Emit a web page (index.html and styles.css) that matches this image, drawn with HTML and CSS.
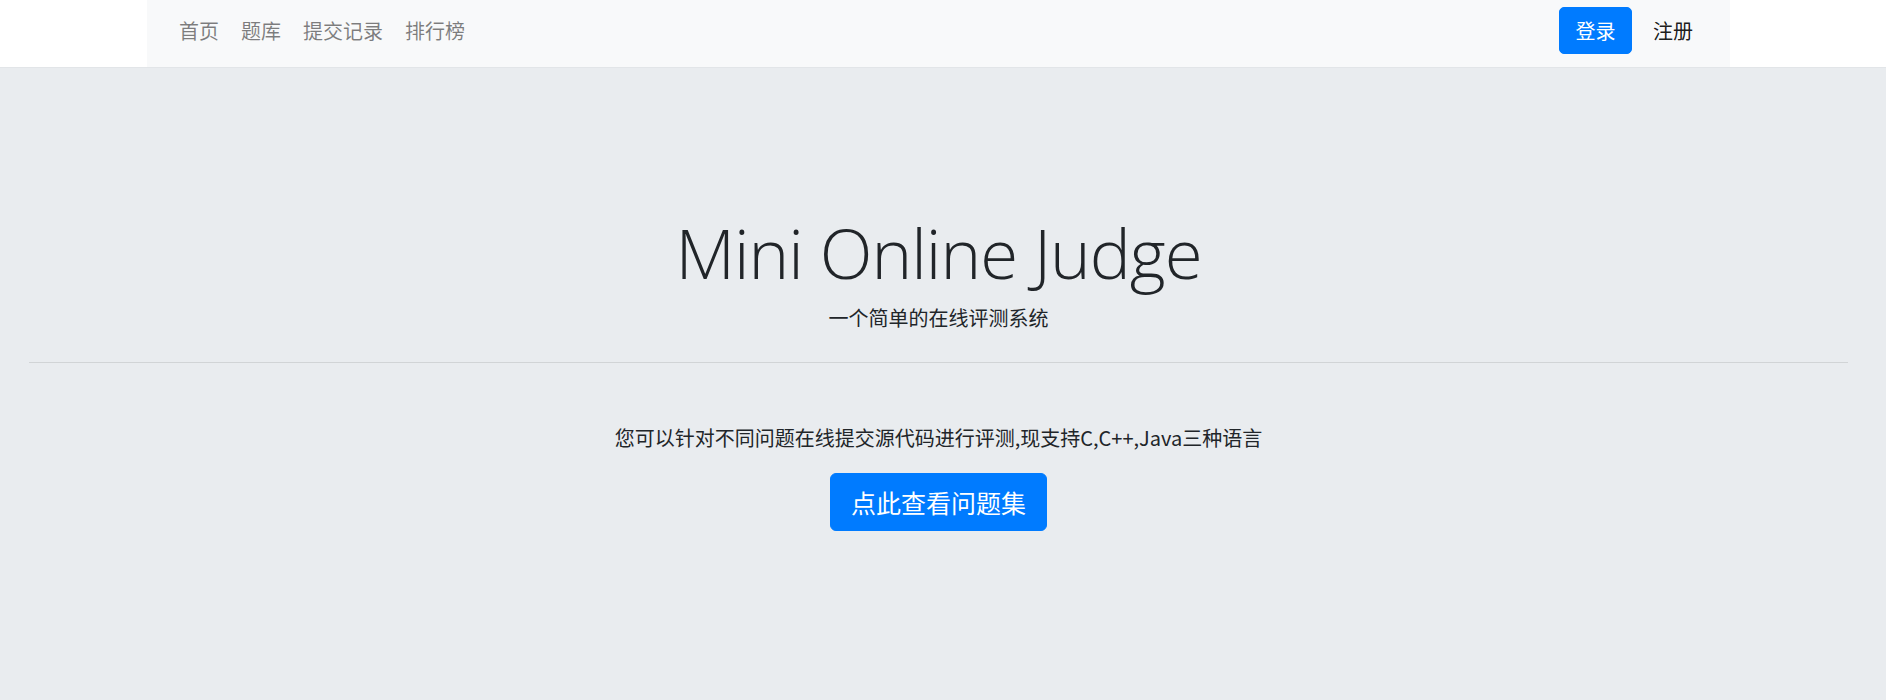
FILE: index.html
```html
<!DOCTYPE html>
<html lang="zh-CN">
<head>
<meta charset="utf-8">
<title>Mini Online Judge</title>
<link rel="stylesheet" href="styles.css">
</head>
<body>
<header class="topbar">
  <nav class="navbar">
    <ul class="nav-left">
      <li><a class="nav-link" href="#">首页</a></li>
      <li><a class="nav-link" href="#">题库</a></li>
      <li><a class="nav-link" href="#">提交记录</a></li>
      <li><a class="nav-link" href="#">排行榜</a></li>
    </ul>
    <div class="nav-right">
      <a class="btn btn-login" href="#">登录</a>
      <a class="nav-link nav-link-dark" href="#">注册</a>
    </div>
  </nav>
</header>
<main class="jumbotron">
  <div class="jumbo-inner">
    <h1 class="display-title">Mini Online Judge</h1>
    <p class="subtitle">一个简单的在线评测系统</p>
    <hr class="divider">
    <p class="intro">您可以针对不同问题在线提交源代码进行评测,现支持C,C++,Java三种语言</p>
    <a class="btn btn-lg" href="#">点此查看问题集</a>
  </div>
</main>
</body>
</html>
```

FILE: styles.css
```css
* { box-sizing: border-box; }

html, body {
  margin: 0;
  padding: 0;
  height: 100%;
}

body {
  background: #ffffff;
  color: #212529;
  font-family: "Noto Sans CJK SC", "Noto Sans", sans-serif;
  font-size: 20px;
  display: flex;
  flex-direction: column;
}

.topbar {
  height: 67px;
  padding-left: 147px;
  background: #ffffff;
}

.navbar {
  width: 1583px;
  height: 67px;
  background: #f8f9fa;
  display: flex;
  justify-content: space-between;
  align-items: flex-start;
  padding: 7px 27px 0 21px;
}

.nav-left {
  list-style: none;
  margin: 0;
  padding: 0;
  display: flex;
}

.nav-link {
  display: block;
  padding: 0 11px;
  line-height: 48px;
  color: rgba(0, 0, 0, 0.5);
  text-decoration: none;
  font-size: 20px;
}

.nav-link-dark {
  color: rgba(0, 0, 0, 0.9);
  padding: 0 10px;
}

.nav-right {
  display: flex;
  align-items: flex-start;
  gap: 11px;
}

.btn {
  display: inline-block;
  background: #007bff;
  border: 1px solid #007bff;
  color: #ffffff;
  text-decoration: none;
  text-align: center;
  border-radius: 5px;
}

.btn-login {
  font-size: 20px;
  line-height: 45px;
  padding: 0 15.5px;
}

.jumbotron {
  flex: 1;
  background: #e9ecef;
  border-top: 1px solid #e2e5e8;
  padding: 142px 38px 0 29px;
}

.jumbo-inner {
  text-align: center;
  display: flex;
  flex-direction: column;
  align-items: center;
}

.display-title {
  margin: 0;
  font-family: "Open Sans", sans-serif;
  font-weight: 300;
  font-size: 69px;
  letter-spacing: -1px;
  line-height: 84px;
  color: #212529;
}

.subtitle {
  margin: 9px 0 0;
  font-size: 20px;
  line-height: 30px;
}

.divider {
  align-self: stretch;
  margin: 29px 0 0;
  border: 0;
  border-top: 1px solid rgba(0, 0, 0, 0.1);
  height: 0;
}

.intro {
  margin: 60px 0 0;
  font-size: 20px;
  line-height: 30px;
}

.btn-lg {
  margin-top: 20px;
  font-size: 25px;
  line-height: 36px;
  padding: 10px 20px;
  border-radius: 6px;
}
```
